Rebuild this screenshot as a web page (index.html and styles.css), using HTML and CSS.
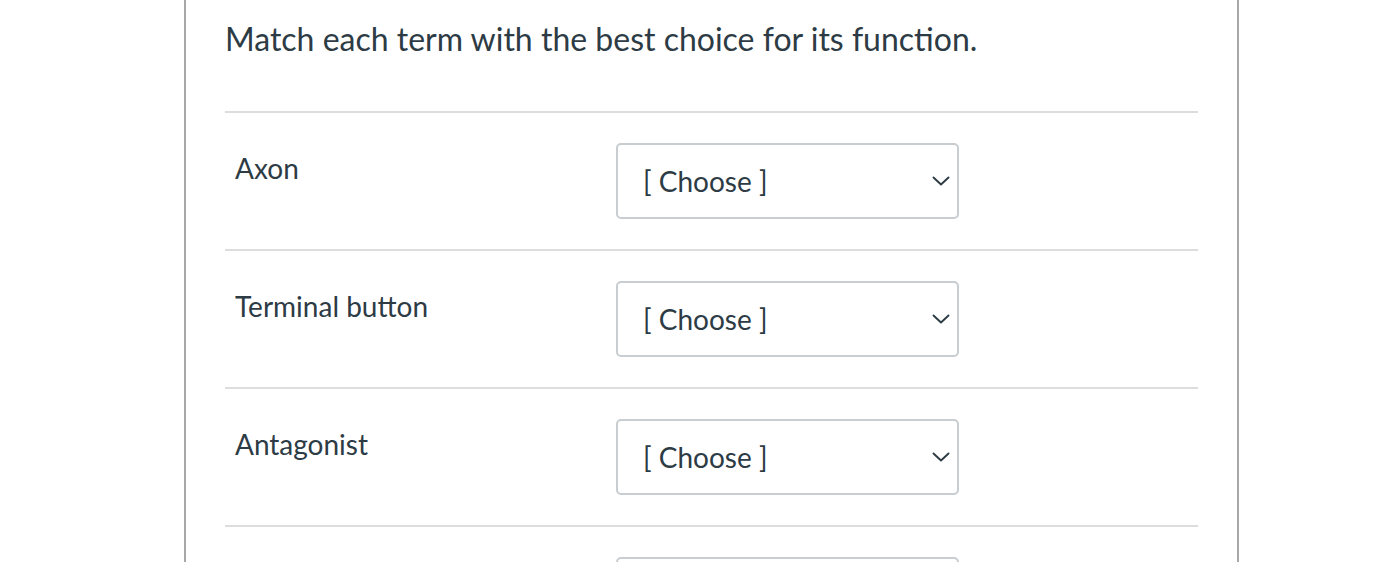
FILE: index.html
```html
<!DOCTYPE html>
<html>
<head>
<meta charset="utf-8">
<link rel="stylesheet" href="styles.css">
</head>
<body>
<div class="page">
  <div class="card">
    <div class="question">Match each term with the best choice for its function.</div>
    <div class="rows">
      <div class="row">
        <div class="term">Axon</div>
        <div class="select"><span>[ Choose ]</span><svg class="chev" viewBox="0 0 18 10" width="18" height="10"><path d="M1.5 1.5 L9 8.5 L16.5 1.5" fill="none" stroke="#2d3b45" stroke-width="1.9" stroke-linecap="round" stroke-linejoin="round"/></svg></div>
      </div>
      <div class="row">
        <div class="term">Terminal button</div>
        <div class="select"><span>[ Choose ]</span><svg class="chev" viewBox="0 0 18 10" width="18" height="10"><path d="M1.5 1.5 L9 8.5 L16.5 1.5" fill="none" stroke="#2d3b45" stroke-width="1.9" stroke-linecap="round" stroke-linejoin="round"/></svg></div>
      </div>
      <div class="row">
        <div class="term">Antagonist</div>
        <div class="select"><span>[ Choose ]</span><svg class="chev" viewBox="0 0 18 10" width="18" height="10"><path d="M1.5 1.5 L9 8.5 L16.5 1.5" fill="none" stroke="#2d3b45" stroke-width="1.9" stroke-linecap="round" stroke-linejoin="round"/></svg></div>
      </div>
      <div class="row">
        <div class="term"></div>
        <div class="select"></div>
      </div>
    </div>
  </div>
</div>
</body>
</html>
```

FILE: styles.css
```css
html, body {
  margin: 0;
  padding: 0;
  background: #ffffff;
  height: 562px;
  overflow: hidden;
}
body {
  font-family: Lato, "Liberation Sans", sans-serif;
  color: #2d3b45;
}
.page {
  padding-left: 184px;
}
.card {
  border-left: 2px solid #a8a8a8;
  border-right: 2px solid #a8a8a8;
  padding: 0 39px;
  box-sizing: content-box;
  width: 973px;
  min-height: 700px;
}
.question {
  font-size: 32px;
  line-height: 40px;
  padding-top: 19px;
  padding-bottom: 52px;
}
.rows {
  border-top: 2px solid #dddddd;
}
.row {
  display: flex;
  align-items: flex-start;
  border-bottom: 2px solid #dddddd;
  padding: 30px 0;
  height: 76px;
}
.term {
  width: 381px;
  padding-left: 10px;
  font-size: 28px;
  line-height: 36px;
  margin-top: 7px;
}
.select {
  box-sizing: border-box;
  width: 343px;
  height: 76px;
  border: 2px solid #c7cdd1;
  border-radius: 5px;
  display: flex;
  align-items: center;
  justify-content: space-between;
  padding: 0 7px 0 25px;
  font-size: 28px;
}
.chev {
  display: block;
}
```
